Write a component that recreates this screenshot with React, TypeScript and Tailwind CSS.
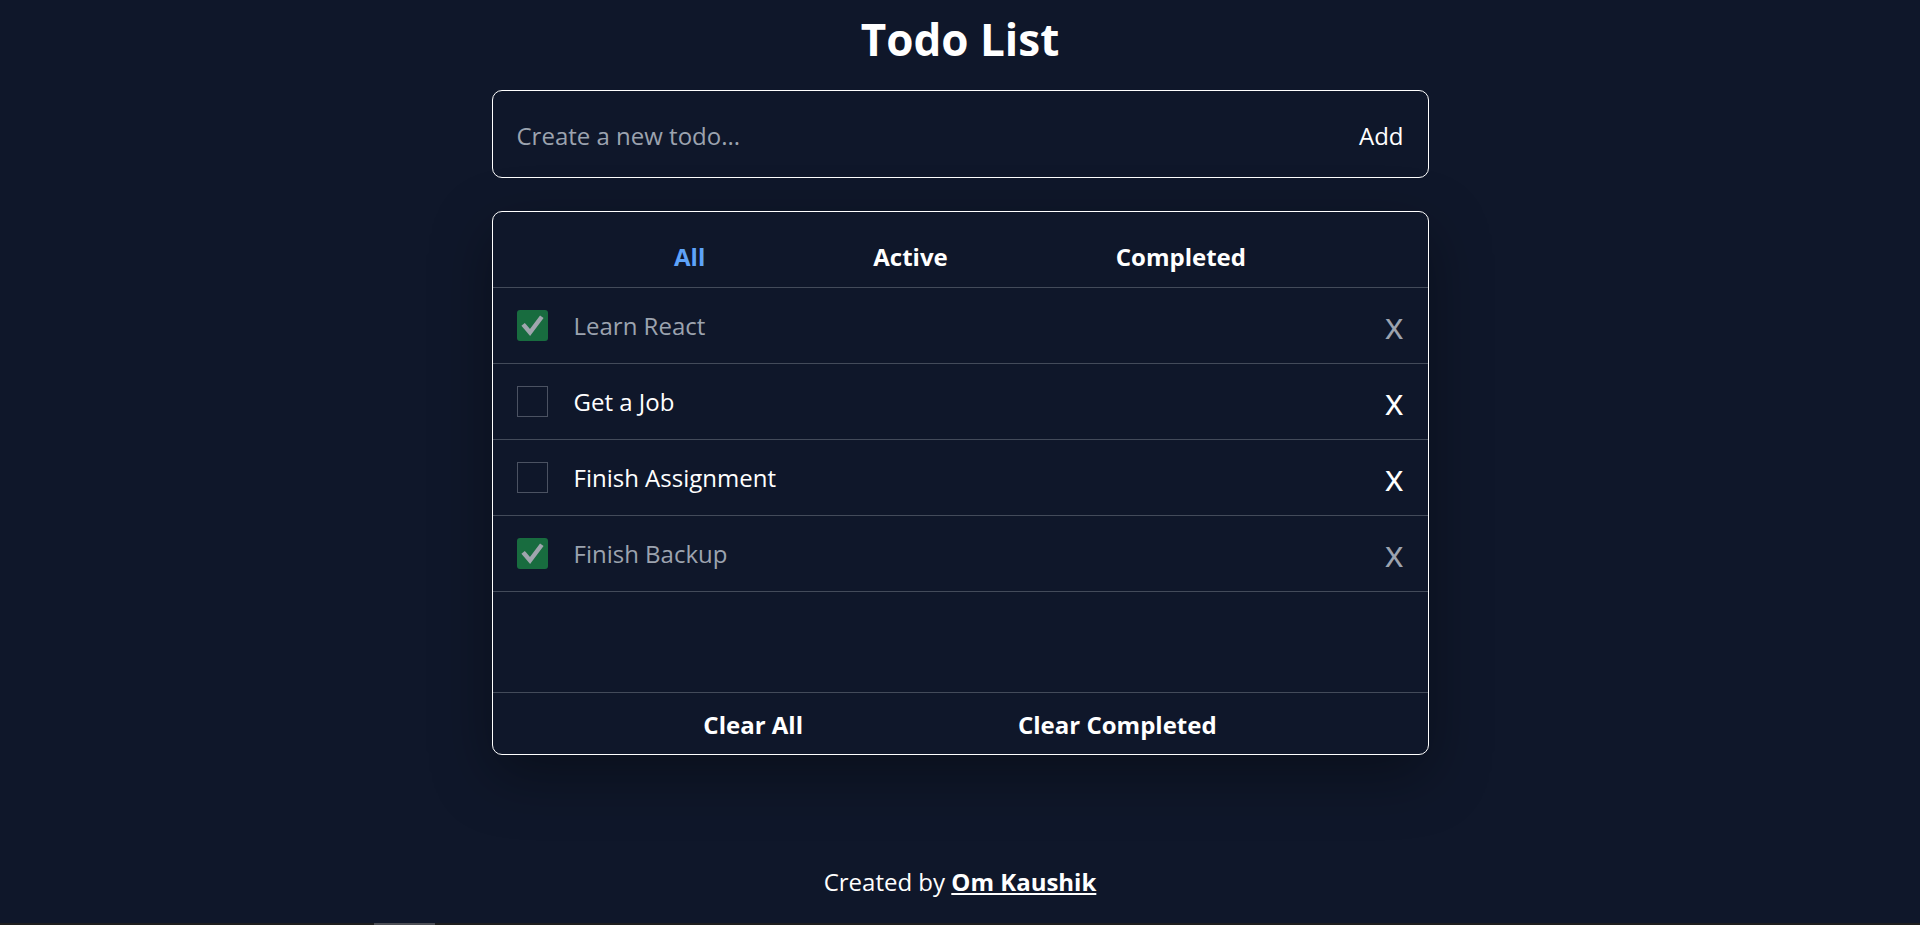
import React from "react";

type Todo = { text: string; done: boolean };

const todos: Todo[] = [
  { text: "Learn React", done: true },
  { text: "Get a Job", done: false },
  { text: "Finish Assignment", done: false },
  { text: "Finish Backup", done: true },
];

function Check({ done }: { done: boolean }) {
  if (done) {
    return (
      <div className="w-[31px] h-[31px] rounded-[3px] bg-[#186c3f] flex items-center justify-center shrink-0">
        <svg width="31" height="31" viewBox="0 0 31 31">
          <polyline
            points="7.5,16 13,22.5 23.5,8.5"
            fill="none"
            stroke="#a0a5ae"
            strokeWidth="4.4"
            strokeLinecap="square"
          />
        </svg>
      </div>
    );
  }
  return <div className="w-[31px] h-[31px] border border-[#4b5262] shrink-0" />;
}

export default function App() {
  return (
    <div className="h-[925px] bg-[#0f172a] flex flex-col items-center font-['Open_Sans',sans-serif] text-white overflow-hidden">
      <h1 className="mt-[11px] text-[44px] leading-[56px] font-bold text-white">Todo List</h1>

      <div className="mt-[23px] w-[937px] h-[88px] rounded-[10px] border border-white flex items-center px-6 pt-[3px]">
        <input
          className="flex-1 bg-transparent outline-none text-[24px] text-white placeholder:text-[#9ca3af]"
          placeholder="Create a new todo..."
        />
        <button className="text-[24px] text-white">Add</button>
      </div>

      <div className="mt-[33px] w-[937px] rounded-[10px] border border-white shadow-[0_20px_60px_rgba(0,0,0,0.35)] flex flex-col">
        <div className="h-[76px] pt-[14px] border-b border-[#434b5a] flex items-center justify-center gap-[168px] text-[24px] font-bold">
          <button className="text-[#5ea3f9]">All</button>
          <button className="text-white">Active</button>
          <button className="text-white">Completed</button>
        </div>
        {todos.map((t) => (
          <div key={t.text} className="h-[76px] border-b border-[#434b5a] flex items-center px-6">
            <Check done={t.done} />
            <span className={`ml-[26px] text-[24px] ${t.done ? "text-[#9ca3af]" : "text-white"}`}>{t.text}</span>
            <button className={`ml-auto text-[36px] leading-none ${t.done ? "text-[#9ca3af]" : "text-white"}`}>x</button>
          </div>
        ))}
        <div className="h-[101px] border-b border-[#434b5a]" />
        <div className="h-[61px] pt-[2px] flex items-center justify-center gap-[215px] text-[24px] font-bold">
          <button className="text-white">Clear All</button>
          <button className="text-white">Clear Completed</button>
        </div>
      </div>

      <p className="mt-[111px] text-[24px] leading-[32px] text-white">
        Created by <a className="font-bold underline" href="#">Om Kaushik</a>
      </p>

      <div className="mt-auto w-full h-[2px] bg-[#1e1e1e] flex">
        <div className="ml-[374px] w-[61px] h-full bg-[#4d4f55]" />
      </div>
    </div>
  );
}
